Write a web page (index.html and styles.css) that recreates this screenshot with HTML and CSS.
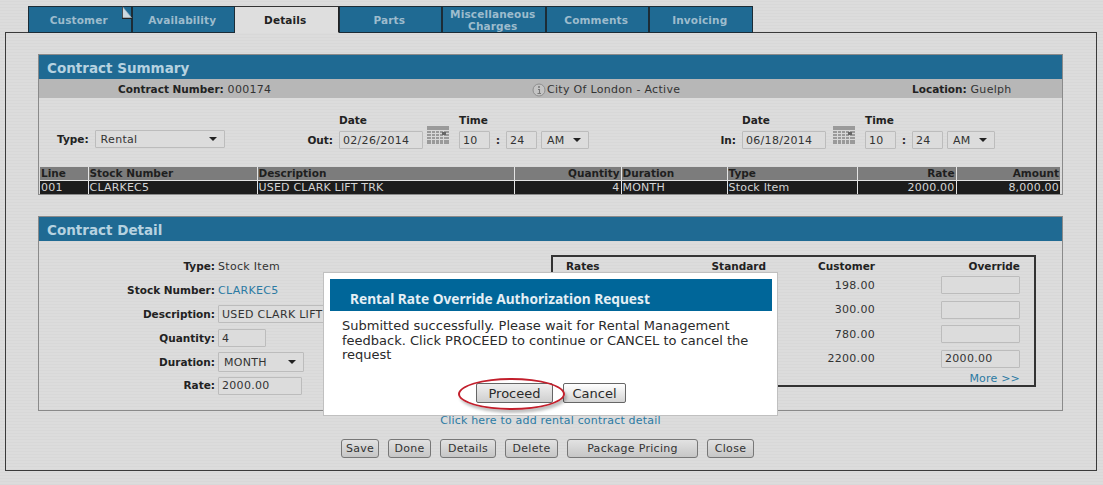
FILE: index.html
```html
<!DOCTYPE html>
<html lang="en">
<head>
<meta charset="utf-8">
<title>Contract</title>
<link rel="stylesheet" href="styles.css">
</head>
<body>
<nav class="tabs">
  <div class="tab">Customer
    <svg class="dogear" width="10" height="13" viewBox="0 0 10 13"><path d="M0 0L10 12H0Z" fill="#ccd8e0"/><path d="M0 0L10 12.500" fill="none" stroke="#8fa8b8" stroke-width=".6"/><path d="M0 0V12.500H10" fill="none" stroke="#222" stroke-width="1.500"/></svg>
  </div>
  <div class="tab">Availability</div>
  <div class="tab active">Details</div>
  <div class="tab">Parts</div>
  <div class="tab two">Miscellaneous<br>Charges</div>
  <div class="tab">Comments</div>
  <div class="tab">Invoicing</div>
</nav>
<main class="frame">
  <section class="panel summary">
    <h2 class="panel-title">Contract Summary</h2>
    <div class="infobar">
      <div class="info-a"><b>Contract Number:</b> 000174</div>
      <div class="info-b">
        <svg class="info-icon" width="14" height="14" viewBox="0 0 14 14"><circle cx="7" cy="7" r="6" fill="#c4c4c4" stroke="#8f8f8f"/><circle cx="7" cy="4" r="1" fill="#777"/><path d="M6 6.500H7.500V10.500M5.500 10.500H9" fill="none" stroke="#777" stroke-width="1.100"/></svg>
        City Of London - Active
      </div>
      <div class="info-c"><b>Location:</b> Guelph</div>
    </div>
    <div class="dates">
      <div class="type-field"><b>Type:</b><div class="select sel-type">Rental<i class="arrow"></i></div></div>
      <div class="dt dt-out">
        <div class="dt-label"><b>Out:</b></div>
        <div class="dt-col"><b>Date</b><input class="field f-date" value="02/26/2014"></div>
        <svg class="cal" width="22" height="18" viewBox="0 0 22 18"><rect width="22" height="18" fill="#9a9a9a"/><path d="M0 4.500H22M0 7.500H22M0 10.500H22M0 13.500H22M4.500 4V18M8.500 4V18M12.500 4V18M16.500 4V18" stroke="#d8d8d8"/><rect x="15" y="6" width="4" height="3" fill="#666"/></svg>
        <div class="dt-col t-col"><b>Time</b><div class="time"><input class="field f-time" value="10"><span class="colon">:</span><input class="field f-time" value="24"><div class="select sel-ampm">AM<i class="arrow"></i></div></div></div>
      </div>
      <div class="dt dt-in">
        <div class="dt-label"><b>In:</b></div>
        <div class="dt-col"><b>Date</b><input class="field f-date" value="06/18/2014"></div>
        <svg class="cal" width="22" height="18" viewBox="0 0 22 18"><rect width="22" height="18" fill="#9a9a9a"/><path d="M0 4.500H22M0 7.500H22M0 10.500H22M0 13.500H22M4.500 4V18M8.500 4V18M12.500 4V18M16.500 4V18" stroke="#d8d8d8"/><rect x="15" y="6" width="4" height="3" fill="#666"/></svg>
        <div class="dt-col t-col"><b>Time</b><div class="time"><input class="field f-time" value="10"><span class="colon">:</span><input class="field f-time" value="24"><div class="select sel-ampm">AM<i class="arrow"></i></div></div></div>
      </div>
    </div>
    <table class="lines">
      <colgroup><col class="c1"><col class="c2"><col class="c3"><col class="c4"><col class="c5"><col class="c6"><col class="c7"><col class="c8"></colgroup>
      <thead><tr><th>Line</th><th>Stock Number</th><th>Description</th><th class="num">Quantity</th><th>Duration</th><th>Type</th><th class="num">Rate</th><th class="num">Amount</th></tr></thead>
      <tbody><tr><td>001</td><td>CLARKEC5</td><td>USED CLARK LIFT TRK</td><td class="num">4</td><td>MONTH</td><td>Stock Item</td><td class="num">2000.00</td><td class="num">8,000.00</td></tr></tbody>
    </table>
  </section>

  <section class="panel detail">
    <h2 class="panel-title">Contract Detail</h2>
    <div class="detail-body">
      <div class="form">
        <b>Type:</b><div>Stock Item</div>
        <b>Stock Number:</b><div><a class="link">CLARKEC5</a></div>
        <b>Description:</b><div><input class="field f-desc" value="USED CLARK LIFT TRK"></div>
        <b>Quantity:</b><div><input class="field f-qty" value="4"></div>
        <b>Duration:</b><div><div class="select sel-dur">MONTH<i class="arrow"></i></div></div>
        <b>Rate:</b><div><input class="field f-rate" value="2000.00"></div>
      </div>
      <div class="rates">
        <div class="rates-grid">
          <b>Rates</b><b class="r">Standard</b><b class="r">Customer</b><b class="r">Override</b>
          <span></span><span></span><span class="r">198.00</span><input class="field f-ov">
          <span></span><span></span><span class="r">300.00</span><input class="field f-ov">
          <span></span><span></span><span class="r">780.00</span><input class="field f-ov">
          <span></span><span></span><span class="r">2200.00</span><input class="field f-ov" value="2000.00">
        </div>
        <a class="link more">More &gt;&gt;</a>
      </div>
    </div>
  </section>

  <div class="add-link"><a class="link">Click here to add rental contract detail</a></div>
  <div class="actions">
    <button class="btn b-save">Save</button>
    <button class="btn b-done">Done</button>
    <button class="btn b-details">Details</button>
    <button class="btn b-delete">Delete</button>
    <button class="btn b-pack">Package Pricing</button>
    <button class="btn b-close">Close</button>
  </div>
</main>

<div class="modal">
  <h3 class="modal-title">Rental Rate Override Authorization Request</h3>
  <p class="modal-text">Submitted successfully. Please wait for Rental Management feedback. Click PROCEED to continue or CANCEL to cancel the request</p>
  <div class="modal-actions">
    <button class="mbtn m-proceed">Proceed</button>
    <button class="mbtn m-cancel">Cancel</button>
  </div>
  <div class="ring"></div>
</div>
</body>
</html>
```
FILE: styles.css
```css
* { box-sizing: border-box; }
html, body { margin: 0; height: 100%; }
body {
  width: 1103px;
  height: 485px;
  overflow: hidden;
  position: relative;
  padding-top: 6px;
  font: 11px/13px "DejaVu Sans", sans-serif;
  letter-spacing: .3px;
  color: #333;
  background: #dadada repeating-linear-gradient(0deg, #d8d8d8 0 1px, #dcdcdc 1px 3px);
}
b { font-size: 10.500px; letter-spacing: 0; font-weight: bold; color: #222; }

.tabs { display: flex; margin-left: 28px; height: 27px; position: relative; z-index: 1; }
.tab {
  position: relative;
  width: 103.500px;
  display: flex;
  align-items: center;
  justify-content: center;
  padding-top: 1px;
  padding-right: 2px;
  text-align: center;
  font-weight: bold;
  font-size: 10.500px;
  line-height: 12px;
  letter-spacing: .15px;
  color: #9dbccd;
  background: #1f6a93;
  border: 1px solid #1c2c36;
}
.tab.active { background: #dedede; color: #222; border-color: #dedede; border-top: 1px solid #333; border-left: 0; border-right: 1px solid #222; }
.dogear { position: absolute; top: -1px; right: -1px; }

.frame {
  width: 1092px;
  height: 439px;
  margin: -1px 0 0 5px;
  padding: 21px 0 0 32px;
  border: 1px solid #3a3a3a;
}

.panel { width: 1025px; border: 1px solid #8a8a8a; }
.summary { height: 141px; }
.detail { height: 195px; margin-top: 21px; }
.panel-title {
  margin: 0;
  height: 24px;
  padding: 1px 0 0 8px;
  font-size: 13.500px;
  line-height: 24px;
  font-weight: bold;
  letter-spacing: 0;
  color: #b6d2e0;
  background: #1f6a93;
}

.infobar { display: flex; height: 19px; padding-top: 2px; align-items: center; background: #b7b7b7; position: relative; }
.info-a { margin-left: 79px; width: 414px; }
.info-b { width: 380px; display: flex; align-items: center; gap: 1px; }
.info-icon { flex: none; }

.dates { display: flex; height: 69px; align-items: flex-start; }
.type-field { display: flex; align-items: center; gap: 6px; margin: 32px 0 0 18px; width: 245px; }
.dt { display: flex; align-items: flex-start; }
.dt-out { width: 403px; }
.dt-label { width: 31px; text-align: right; margin: 36px 6px 0 0; }
.dt-col { display: flex; flex-direction: column; gap: 4px; }
.dt-col > b { height: 13px; margin-top: 16px; }
.cal { margin: 28px 0 0 4px; flex: none; }
.dt-in .cal { margin-left: 7px; }
.t-col { margin-left: 10px; }
.time { display: flex; align-items: flex-start; }
.colon { width: 16px; text-align: center; font-weight: bold; line-height: 20px; }

.field {
  display: block;
  height: 18px;
  padding: 1px 3px;
  font: 11px "DejaVu Sans", sans-serif;
  letter-spacing: .3px;
  color: #333;
  background: #dcdcdc;
  border: 1px solid #bcbcbc;
  border-radius: 1px;
  outline: 0;
}
.f-date { width: 84px; }
.f-time { width: 31px; }
.f-desc { width: 200px; }
.f-qty { width: 48px; }
.f-rate { width: 84px; }
.f-ov { width: 79px; justify-self: end; }

.select {
  display: flex;
  align-items: center;
  justify-content: space-between;
  height: 18px;
  padding: 0 7px 0 5px;
  background: #dcdcdc;
  border: 1px solid #bcbcbc;
  border-radius: 1px;
}
.arrow { width: 0; height: 0; border: 4px solid transparent; border-top: 4px solid #222; border-bottom: 0; }
.sel-type { width: 130px; }
.sel-ampm { width: 48px; margin-left: 4px; }
.sel-dur { width: 86px; height: 20px; }

.lines {
  width: 1020px;
  margin-left: 1px;
  table-layout: fixed;
  border-collapse: collapse;
}
.c1 { width: 48px; } .c2 { width: 169px; } .c3 { width: 257px; } .c4 { width: 107px; }
.c5 { width: 106px; } .c6 { width: 130px; } .c7 { width: 99px; } .c8 { width: 104px; }
.lines th, .lines td { padding: 0 1px; line-height: 13px; text-align: left; white-space: nowrap; border-left: 1px solid #e4e4e4; }
.lines th:first-child, .lines td:first-child { border-left: 0; }
.lines th { font-size: 10.500px; letter-spacing: 0; background: #7c7c7c; color: #1f1f1f; border-bottom: 1px solid #e4e4e4; }
.lines td { font-size: 11px; background: #1c1c1c; color: #d4d4d4; letter-spacing: .2px; }
.lines .num { text-align: right; }

.detail-body { display: flex; padding-top: 14px; }
.form {
  width: 512px;
  display: grid;
  grid-template-columns: 176px 1fr;
  column-gap: 3px;
  grid-auto-rows: 23.800px;
  align-items: center;
}
.form > b { text-align: right; }
.link { color: #2b7aa3; }

.rates { width: 485px; height: 132px; border: 2px solid #333; padding: 2px 14px 0 13px; display: flex; flex-direction: column; }
.rates-grid {
  display: grid;
  grid-template-columns: 1fr 100px 109px 145px;
  grid-template-rows: 14px repeat(4, 24.500px);
  align-items: center;
}
.r { text-align: right; justify-self: end; }
.more { align-self: flex-end; margin-top: 1px; letter-spacing: .2px; }

.add-link { width: 1025px; height: 14px; margin-top: 3px; text-align: center; letter-spacing: .2px; }
.actions { width: 1025px; display: flex; gap: 9px; margin-top: 11px; padding-left: 303px; }
.btn {
  height: 19px;
  padding: 0;
  font: 11px "DejaVu Sans", sans-serif;
  letter-spacing: .3px;
  color: #333;
  background: linear-gradient(#e2e2e2, #c6c6c6);
  border: 1px solid #777;
  border-radius: 3px;
}
.b-save { width: 38px; } .b-done { width: 43px; } .b-details { width: 56px; }
.b-delete { width: 53px; } .b-pack { width: 131px; } .b-close { width: 47px; }

.modal {
  position: absolute;
  left: 323px;
  top: 272px;
  width: 455px;
  height: 144px;
  padding: 6px 5px 0 6px;
  letter-spacing: 0;
  background: #fff;
  border: 1px solid #c0c0c0;
  z-index: 2;
}
.modal-title {
  margin: 0;
  height: 32px;
  padding: 11px 0 0 20px;
  font: bold 13.700px/17px "Noto Sans", sans-serif;
  color: #e4eff5;
  background: #006699;
  white-space: nowrap;
}
.modal-text {
  margin: 8px 0 0 12px;
  width: 420px;
  font-size: 13px;
  line-height: 14.600px;
  color: #2a2a2a;
}
.modal-actions { display: flex; gap: 10px; position: absolute; left: 152px; top: 110px; }
.mbtn {
  height: 20px;
  padding: 0;
  font: 13px "DejaVu Sans", sans-serif;
  color: #2a2a2a;
  background: linear-gradient(#efefef, #cfcfcf);
  border: 1px solid #666;
  border-radius: 2px;
}
.m-proceed { width: 77px; }
.m-cancel { width: 63px; background: linear-gradient(#fff, #d4d4d4); }
.ring {
  position: absolute;
  left: 134px;
  top: 105px;
  width: 107px;
  height: 32px;
  border: 2px solid #c21f2c;
  border-radius: 50%;
  box-shadow: 2px 3px 3px rgba(0,0,0,.25);
  pointer-events: none;
}
```
